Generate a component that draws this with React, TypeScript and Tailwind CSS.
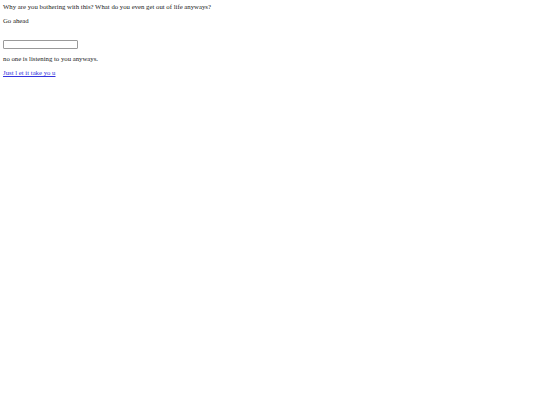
export default function App() {
  return (
    <div className="bg-white min-h-screen px-[3px] pt-[3px] text-[#222]" style={{ fontFamily: '"Liberation Serif", serif' }}>
      <p className="text-[6.75px] leading-[8px]">Why are you bothering with this? What do you even get out of life anyways?</p>
      <p className="text-[6.75px] leading-[8px] mt-[6px]">Go ahead</p>
      <input className="block mt-[15px] w-[75px] h-[9px] border border-[#9a9a9a] rounded-[1px] bg-white" />
      <p className="text-[6.75px] leading-[8px] mt-[6px]">no one is listening to you anyways.</p>
      <a href="#" className="block text-[6.75px] leading-[8px] mt-[6px] text-[#3333dd] underline">Just l et it take yo u</a>
    </div>
  );
}
